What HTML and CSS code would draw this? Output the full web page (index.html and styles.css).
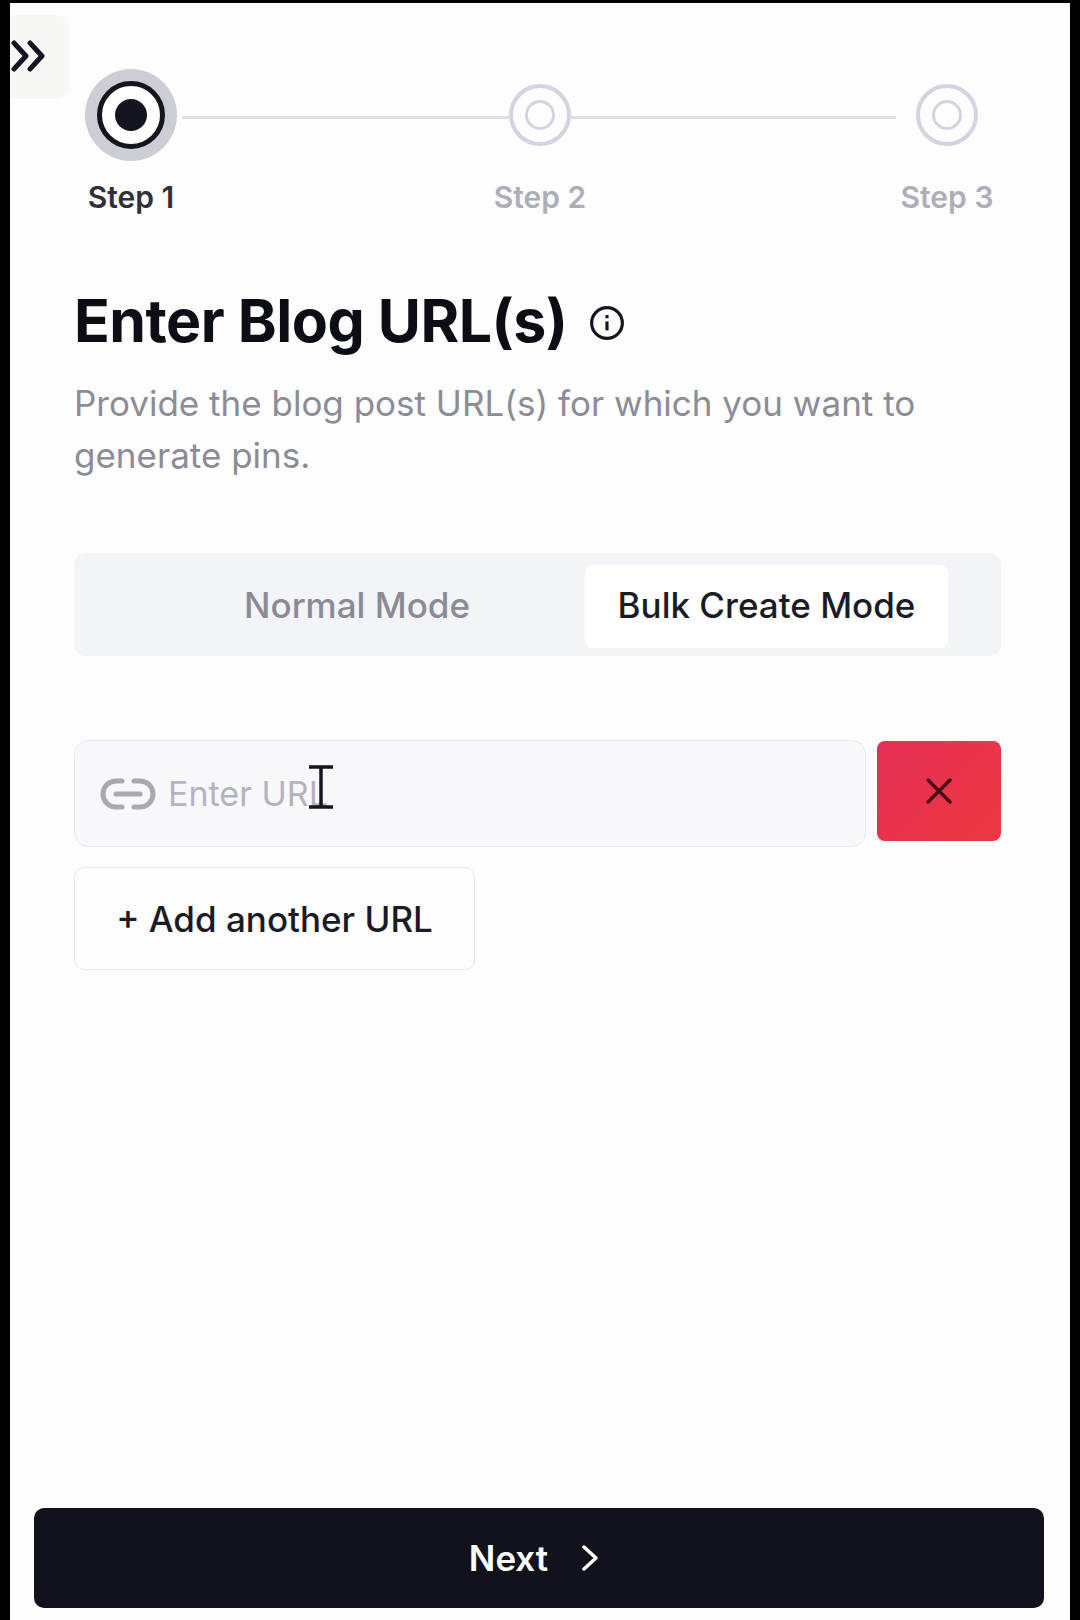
FILE: index.html
```html
<!DOCTYPE html>
<html lang="en">
<head>
    <meta charset="UTF-8">
    <meta name="viewport" content="width=device-width, initial-scale=1.0">
    <link rel="stylesheet" href="styles.css">
    <title>Enter Blog URL(s)</title>
</head>
<body>
    <div class="page">
        <button type="button" class="sidebar-toggle" aria-label="Open sidebar">
            <svg width="36" height="32" viewBox="0 0 36 32" fill="none" stroke="#15151f" stroke-width="5" stroke-linecap="round" stroke-linejoin="round">
                <path d="M4 3l12 13L4 29"/>
                <path d="M20 3l12 13-12 13"/>
            </svg>
        </button>

        <div class="stepper">
            <div class="step step-active">
                <span class="step-halo"><span class="step-ring"><span class="step-dot"></span></span></span>
                <span class="step-label">Step 1</span>
            </div>
            <div class="step-line step-line-first"></div>
            <div class="step">
                <span class="step-circle"><span class="step-inner"></span></span>
                <span class="step-label">Step 2</span>
            </div>
            <div class="step-line step-line-last"></div>
            <div class="step">
                <span class="step-circle"><span class="step-inner"></span></span>
                <span class="step-label">Step 3</span>
            </div>
        </div>

        <main class="content">
            <div class="title-row">
                <h1>Enter Blog URL(s)</h1>
                <svg class="info-icon" width="36" height="36" viewBox="0 0 34 34" fill="none" stroke="#15151f" stroke-width="3">
                    <circle cx="17" cy="17" r="14.5"/>
                    <path d="M17 15.5v8.5"/>
                    <path d="M17 9.5v3"/>
                </svg>
            </div>
            <p class="intro">Provide the blog post URL(s) for which you want to generate pins.</p>

            <div class="mode-switch">
                <button type="button" class="mode-tab">Normal Mode</button>
                <button type="button" class="mode-tab mode-tab-active">Bulk Create Mode</button>
            </div>

            <div class="url-row">
                <label class="url-field">
                    <svg width="58" height="34" viewBox="0 0 58 34" fill="none" stroke="#a9aab0" stroke-width="5" stroke-linecap="round">
                        <path d="M23 4H17a13 13 0 0 0 0 26h6"/>
                        <path d="M35 4h6a13 13 0 0 1 0 26h-6"/>
                        <path d="M17 17h24"/>
                    </svg>
                    <input type="text" placeholder="Enter URL">
                    <svg class="text-cursor" width="24" height="44" viewBox="0 0 24 44" fill="none" stroke="#15151f" stroke-width="3.5">
                        <path d="M0 2h24M0 42h24M12 2v40"/>
                    </svg>
                </label>
                <button type="button" class="remove-btn" aria-label="Remove URL">
                    <svg width="26" height="26" viewBox="0 0 26 26" fill="none" stroke="#4a0a18" stroke-width="3.5" stroke-linecap="round">
                        <path d="M2 2l22 22M24 2L2 24"/>
                    </svg>
                </button>
            </div>
            <button type="button" class="add-btn">+ Add another URL</button>
        </main>

        <button type="button" class="next-btn">
            Next
            <svg width="18" height="26" viewBox="0 0 18 26" fill="none" stroke="#fff" stroke-width="3.5" stroke-linecap="round" stroke-linejoin="round">
                <path d="M3 2l12 11L3 24"/>
            </svg>
        </button>
    </div>
</body>
</html>
```

FILE: styles.css
```css
* {
    box-sizing: border-box;
}

body {
    margin: 0;
    background-color: #000;
    font-family: Inter, "Liberation Sans", sans-serif;
    color: #15151f;
}

button {
    font-family: inherit;
    cursor: pointer;
}

.page {
    position: relative;
    display: flex;
    flex-direction: column;
    height: 1620px;
    margin: 0 10px;
    padding-top: 66px;
    border-top: 3px solid #000;
    background-color: #fdfdfe;
}

.sidebar-toggle {
    position: absolute;
    top: 12px;
    left: 0;
    display: flex;
    align-items: center;
    width: 59px;
    height: 84px;
    padding: 0;
    border: 0;
    border-radius: 0 14px 14px 0;
    background-color: #f7f7f5;
}

.sidebar-toggle svg {
    margin-top: -2px;
}

.stepper {
    display: flex;
    padding-left: 75px;
}

.step {
    display: flex;
    flex-direction: column;
    align-items: center;
    width: 62px;
    padding-top: 15px;
}

.step-active {
    width: 92px;
    padding-top: 0;
    margin-right: 5px;
}

.step-halo {
    display: flex;
    align-items: center;
    justify-content: center;
    width: 92px;
    height: 92px;
    border-radius: 50%;
    background-color: #cdcdd5;
}

.step-ring {
    display: flex;
    align-items: center;
    justify-content: center;
    width: 68px;
    height: 68px;
    border: 5px solid #15151f;
    border-radius: 50%;
    background-color: #fff;
}

.step-dot {
    width: 32px;
    height: 32px;
    border-radius: 50%;
    background-color: #15151f;
}

.step-circle {
    display: flex;
    align-items: center;
    justify-content: center;
    width: 62px;
    height: 62px;
    border: 4px solid #d3d4e0;
    border-radius: 50%;
}

.step-inner {
    width: 30px;
    height: 30px;
    border: 3px solid #d3d4e0;
    border-radius: 50%;
}

.step-label {
    margin-top: 32px;
    font-size: 30px;
    font-weight: 600;
    line-height: 38px;
    white-space: nowrap;
    color: #adaeba;
}

.step-active .step-label {
    margin-top: 17px;
    color: #30303a;
}

.step-line {
    height: 3px;
    margin-top: 47px;
    background-color: #dcdde6;
}

.step-line-first {
    width: 327px;
}

.step-line-last {
    width: 325px;
    margin-right: 20px;
}

.content {
    flex: 1;
    padding: 0 69px 0 64px;
}

.title-row {
    display: flex;
    align-items: center;
    gap: 21px;
    margin-top: 69px;
}

h1 {
    margin: 0;
    font-size: 59px;
    font-weight: 700;
    line-height: 72px;
    letter-spacing: -0.5px;
    color: #0c0e16;
}

.info-icon {
    margin-top: 4px;
}

.intro {
    margin: 20px 0 0;
    font-size: 35px;
    line-height: 52px;
    color: #8b8c96;
}

.mode-switch {
    display: flex;
    justify-content: flex-end;
    margin-top: 72px;
    padding: 12px 53px 8px 0;
    height: 103px;
    border-radius: 12px;
    background-color: #f3f4f8;
}

.mode-tab {
    height: 83px;
    padding: 0 30px 4px;
    border: 0;
    border-radius: 8px;
    background: none;
    font-size: 35px;
    font-weight: 500;
    color: #8a8b95;
}

.mode-tab-active {
    width: 363px;
    margin-left: 85px;
    padding: 0 0 4px;
    background-color: #fff;
    color: #1b1b25;
}

.url-row {
    display: flex;
    gap: 11px;
    margin-top: 84px;
}

.url-field {
    position: relative;
    display: flex;
    align-items: center;
    gap: 9px;
    flex: 1;
    height: 107px;
    padding-left: 24px;
    border: 1px solid #e7e8f2;
    border-radius: 14px;
    background-color: #f8f8fb;
}

.url-field input {
    flex: 1;
    min-width: 0;
    border: 0;
    outline: 0;
    background: none;
    font-family: inherit;
    font-size: 34px;
    font-weight: 400;
}

.url-field input::placeholder {
    color: #b3b4c0;
    opacity: 1;
}

.text-cursor {
    position: absolute;
    top: 24px;
    left: 234px;
}

.remove-btn {
    display: flex;
    align-items: center;
    justify-content: center;
    width: 124px;
    height: 100px;
    margin-top: 1px;
    padding: 0;
    border: 0;
    border-radius: 8px;
    background: linear-gradient(135deg, #e62f55, #ec3840);
}

.add-btn {
    display: block;
    width: 401px;
    height: 103px;
    margin-top: 20px;
    padding: 0;
    border: 1px solid #e7e8f2;
    border-radius: 10px;
    background-color: #fdfdfe;
    font-size: 35px;
    font-weight: 500;
    color: #1b1b25;
}

.next-btn {
    display: flex;
    align-items: center;
    justify-content: center;
    gap: 33px;
    width: 1010px;
    height: 100px;
    margin: 0 0 12px 24px;
    padding: 0 10px 0 0;
    border: 0;
    border-radius: 10px;
    background-color: #11121c;
    font-size: 35px;
    font-weight: 600;
    color: #fff;
}
```
